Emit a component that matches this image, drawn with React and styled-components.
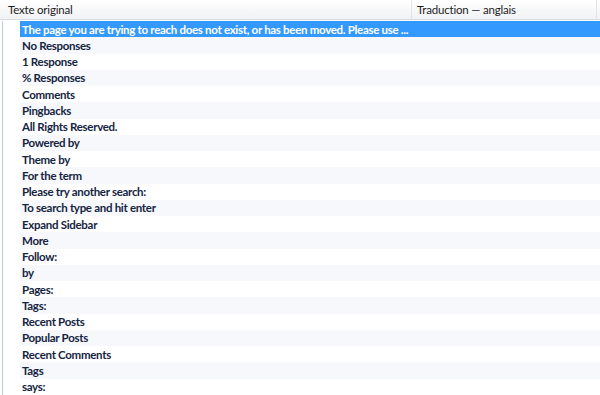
import React from 'react';
import styled, { createGlobalStyle } from 'styled-components';

const GlobalStyle = createGlobalStyle`
  html, body {
    margin: 0;
    padding: 0;
    background: #ffffff;
  }
  body {
    font-family: Lato, "Open Sans", sans-serif;
  }
`;

const Frame = styled.div`
  width: 600px;
  height: 395px;
  overflow: hidden;
  background: #ffffff;
`;

const Header = styled.div`
  display: grid;
  grid-template-columns: 411px 1fr;
  height: 19px;
  background: linear-gradient(#ffffff, #f1f2f4);
  border-bottom: 1px solid #d9dbe0;
`;

const HeaderCell = styled.div`
  display: flex;
  align-items: center;
  padding-left: ${(p) => p.$pad}px;
  font-size: 11.5px;
  letter-spacing: -0.2px;
  color: #1c1c1c;
  border-left: ${(p) => (p.$divider ? '1px solid #e3e4e8' : 'none')};
  border-right: ${(p) => (p.$end ? '1px solid #e3e4e8' : 'none')};
  margin-right: ${(p) => (p.$end ? '3px' : '0')};
`;

const Body = styled.div`
  display: flex;
  padding-top: 1px;
`;

const Gutter = styled.div`
  width: 17px;
  margin-left: 2px;
  border-left: 1px solid #bccde2;
  height: 380px;
`;

const List = styled.div`
  flex: 1;
  display: flex;
  flex-direction: column;
`;

const Row = styled.div`
  height: 16.25px;
  display: flex;
  align-items: center;
  padding-left: 2px;
  font-size: 11.5px;
  letter-spacing: -0.3px;
  font-weight: 700;
  white-space: nowrap;
  color: ${(p) => (p.$selected ? '#ffffff' : '#15243f')};
  background: ${(p) => (p.$selected ? '#3399ff' : p.$alt ? '#f7f8fb' : '#ffffff')};
`;

const strings = [
  'The page you are trying to reach does not exist, or has been moved. Please use ...',
  'No Responses',
  '1 Response',
  '% Responses',
  'Comments',
  'Pingbacks',
  'All Rights Reserved.',
  'Powered by',
  'Theme by',
  'For the term',
  'Please try another search:',
  'To search type and hit enter',
  'Expand Sidebar',
  'More',
  'Follow:',
  'by',
  'Pages:',
  'Tags:',
  'Recent Posts',
  'Popular Posts',
  'Recent Comments',
  'Tags',
  'says:',
];

export default function App() {
  return (
    <Frame>
      <GlobalStyle />
      <Header>
        <HeaderCell $pad={8}>Texte original</HeaderCell>
        <HeaderCell $pad={5} $divider $end>Traduction — anglais</HeaderCell>
      </Header>
      <Body>
        <Gutter />
        <List>
          {strings.map((s, i) => (
            <Row key={i} $selected={i === 0} $alt={i % 2 === 1}>
              {s}
            </Row>
          ))}
        </List>
      </Body>
    </Frame>
  );
}
